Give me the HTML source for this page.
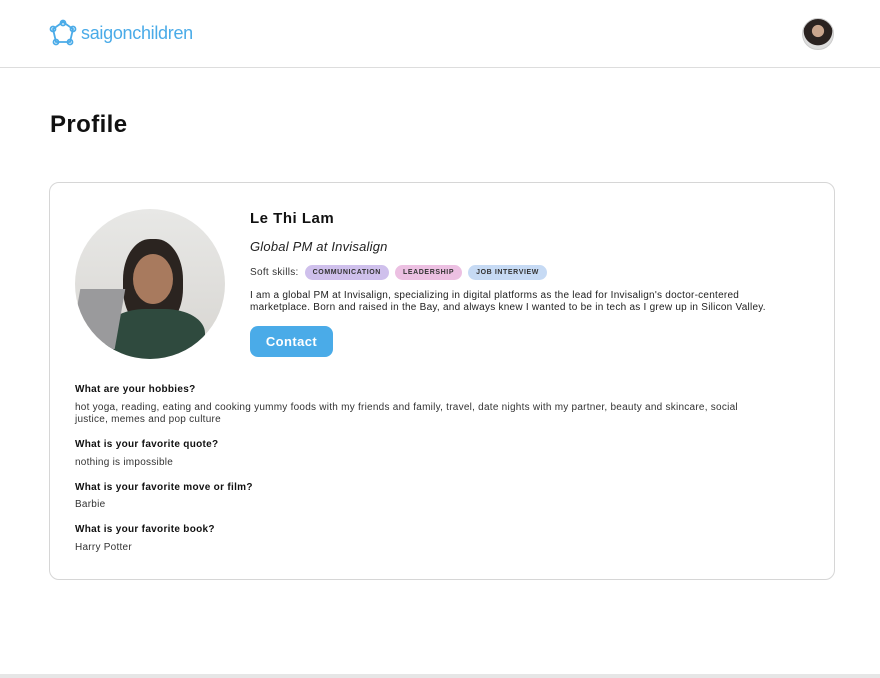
<!DOCTYPE html>
<html><head><meta charset="utf-8"><style>
*{margin:0;padding:0;box-sizing:border-box}
body{width:880px;height:678px;background:#fff;font-family:"Liberation Sans",sans-serif;color:#222;position:relative;overflow:hidden}
.hdr{position:absolute;left:0;top:0;width:880px;height:68px;border-bottom:1px solid #ddd}
.logo{position:absolute;left:49px;top:19px;display:flex;align-items:center;gap:4px;color:#4aabe8;font-size:18px;letter-spacing:-0.3px}
.av{position:absolute;left:802px;top:18px;width:32px;height:32px;border-radius:50%;background:radial-gradient(circle at 50% 40%,#c9a58d 0 25%,#2a2220 27% 60%,#ddd 62%);border:1px solid #ccc}
h1{position:absolute;left:50px;top:111px;font-size:24px;font-weight:bold;color:#111;letter-spacing:0.4px}
.card{position:absolute;left:49px;top:182px;width:786px;height:398px;border:1px solid #d6d6d6;border-radius:10px}
.photo{position:absolute;left:25px;top:26px;width:150px;height:150px;border-radius:50%;overflow:hidden;background:linear-gradient(#e8e8e6,#d7d5d1)}
.abs{position:absolute}
.pill{display:inline-block;height:15px;line-height:15px;padding:0 8px;border-radius:8px;font-size:7px;font-weight:bold;color:#333;margin-left:6px;letter-spacing:.6px}
.q{position:absolute;left:25px;font-size:10px;font-weight:bold;color:#111;letter-spacing:0.3px}
.a{position:absolute;left:25px;font-size:10px;color:#333;line-height:12px;width:695px;letter-spacing:0.25px}
.foot{position:absolute;left:0;top:674px;width:880px;height:4px;background:#e6e6e6}
</style></head><body>
<div class="hdr">
 <div class="logo"><svg width="28" height="28" viewBox="0 0 28 28" fill="none" stroke="#4aabe8" stroke-width="1.8"><polygon points="14,3 24,10 21,23 7,23 4,10"/><circle cx="14" cy="4" r="2.5"/><circle cx="24" cy="10" r="2.5"/><circle cx="21" cy="23" r="2.5"/><circle cx="7" cy="23" r="2.5"/><circle cx="4" cy="10" r="2.5"/></svg><span>saigonchildren</span></div>
 <div class="av"></div>
</div>
<h1>Profile</h1>
<div class="card">
 <div class="photo">
  <div class="abs" style="left:48px;top:30px;width:60px;height:90px;border-radius:45%;background:#2b2420"></div>
  <div class="abs" style="left:58px;top:45px;width:40px;height:50px;border-radius:50%;background:#a87a5e"></div>
  <div class="abs" style="left:30px;top:100px;width:100px;height:60px;border-radius:40%;background:#2f4a3e"></div>
  <div class="abs" style="left:0px;top:80px;width:45px;height:60px;background:#9a9a9c;transform:skewX(-10deg)"></div>
 </div>
 <div class="abs" style="left:200px;top:27px;font-size:15px;font-weight:bold;color:#111;letter-spacing:0.5px">Le Thi Lam</div>
 <div class="abs" style="left:200px;top:56px;font-size:13px;font-style:italic;color:#222;letter-spacing:0.2px">Global PM at Invisalign</div>
 <div class="abs" style="left:200px;top:82px;font-size:10px;color:#333;display:flex;align-items:center;letter-spacing:0.3px">Soft skills:<span class="pill" style="background:#cfc0ec">COMMUNICATION</span><span class="pill" style="background:#ecc0e2">LEADERSHIP</span><span class="pill" style="background:#c6daf4">JOB INTERVIEW</span></div>
 <div class="abs" style="left:200px;top:107px;width:548px;font-size:10px;line-height:12px;color:#222;letter-spacing:0.25px">I am a global PM at Invisalign, specializing in digital platforms as the lead for Invisalign's doctor-centered marketplace. Born and raised in the Bay, and always knew I wanted to be in tech as I grew up in Silicon Valley.</div>
 <div class="abs" style="left:200px;top:143px;width:83px;height:31px;border-radius:8px;background:#4aabe8;color:#fff;font-size:13px;font-weight:bold;text-align:center;line-height:31px;letter-spacing:0.4px">Contact</div>
 <div class="q" style="top:201px">What are your hobbies?</div>
 <div class="a" style="top:219px">hot yoga, reading, eating and cooking yummy foods with my friends and family, travel, date nights with my partner, beauty and skincare, social justice, memes and pop culture</div>
 <div class="q" style="top:256px">What is your favorite quote?</div>
 <div class="a" style="top:274px">nothing is impossible</div>
 <div class="q" style="top:299px">What is your favorite move or film?</div>
 <div class="a" style="top:316px">Barbie</div>
 <div class="q" style="top:341px">What is your favorite book?</div>
 <div class="a" style="top:359px">Harry Potter</div>
</div>
<div class="foot"></div>
</body></html>
